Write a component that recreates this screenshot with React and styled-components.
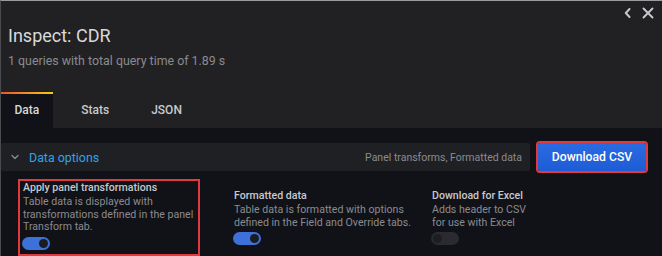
import React from "react";
import styled, { createGlobalStyle } from "styled-components";

const GlobalStyle = createGlobalStyle`
  html, body { margin: 0; padding: 0; background: #111217; overflow: hidden; }
  body { font-family: Roboto, "Liberation Sans", sans-serif; }
`;

const Frame = styled.div`
  width: 662px;
  height: 256px;
  box-sizing: border-box;
  border-top: 1px solid #9a9b9e;
  border-left: 1px solid #4a4b4f;
  background: #111217;
  overflow: hidden;
  display: flex;
  flex-direction: column;
`;

const Header = styled.header`
  background: #212124;
  display: flex;
  flex-direction: column;
`;

const TopActions = styled.div`
  height: 24px;
  display: flex;
  justify-content: flex-end;
  align-items: center;
  gap: 11px;
  padding: 0 8px 0 0;
  color: #c7c9cf;
`;

const IconButton = styled.span`
  display: inline-flex;
  align-items: center;
  justify-content: center;
  width: ${(p) => p.$w}px;
  height: 14px;
`;

const Title = styled.h1`
  margin: 0;
  padding-left: 7px;
  font-size: 18px;
  line-height: 22px;
  font-weight: 400;
  color: #d8d9da;
`;

const Subtitle = styled.div`
  margin-top: 7px;
  padding-left: 7px;
  font-size: 12.4px;
  line-height: 14px;
  color: #8a8b8f;
`;

const TabBar = styled.nav`
  margin-top: 24px;
  height: 36px;
  display: flex;
  gap: 15px;
`;

const Tab = styled.div`
  position: relative;
  height: 36px;
  padding: 0 13.5px;
  display: flex;
  align-items: center;
  font-size: 12px;
  font-weight: 500;
  color: ${(p) => (p.$active ? "#d8d9da" : "#c7c9cf")};
  background: ${(p) => (p.$active ? "#111217" : "transparent")};
  ${(p) =>
    p.$active &&
    `
    &::before {
      content: "";
      position: absolute;
      left: 0; right: 0; top: 0;
      height: 2px;
      background: linear-gradient(90deg, #f0512b 0%, #f6a623 70%, #f2cc0c 100%);
    }
  `}
`;

const Content = styled.main`
  padding: 15px 16px 0 0;
  display: flex;
  flex-direction: column;
`;

const OptionsHeaderRow = styled.div`
  display: flex;
  align-items: center;
  gap: 8px;
`;

const OptionsStrip = styled.div`
  flex: 1;
  height: 28px;
  background: #1f2024;
  border-radius: 2px;
  display: flex;
  align-items: center;
  padding: 0 8px 0 10px;
`;

const Chevron = styled.span`
  display: inline-flex;
  width: 8px;
  margin-right: 10px;
  color: #8a8b8f;
`;

const StripTitle = styled.span`
  font-size: 12.4px;
  color: #33a2e5;
  flex: 1;
`;

const StripSummary = styled.span`
  font-size: 10.5px;
  color: #8a8b8f;
`;

const PrimaryButton = styled.button`
  width: 108px;
  height: 28px;
  border: none;
  border-radius: 2px;
  background: linear-gradient(180deg, #2a6ae3 0%, #1e5cd5 100%);
  color: #ffffff;
  font-family: Roboto, "Liberation Sans", sans-serif;
  font-size: 12.2px;
  font-weight: 500;
  outline: 2px solid #e03a3e;
  outline-offset: 0;
  padding: 0;
`;

const OptionsRow = styled.div`
  margin-top: 8px;
  padding-left: 17px;
  display: flex;
  align-items: center;
`;

const Option = styled.div`
  box-sizing: border-box;
  width: ${(p) => p.$width}px;
  margin-left: ${(p) => p.$offset || 0}px;
  display: flex;
  flex-direction: column;
  ${(p) =>
    p.$highlight &&
    `
    border: 2px solid #e03a3e;
    padding: 0 3px 4px 3px;
  `}
`;

const OptionLabel = styled.div`
  font-size: 10.6px;
  line-height: 13px;
  font-weight: 500;
  color: #c7c9cf;
`;

const OptionDesc = styled.div`
  margin-top: 2px;
  font-size: 10.6px;
  line-height: 12.5px;
  color: #8a8b8f;
`;

const Toggle = styled.span`
  margin-top: 3px;
  margin-left: -1px;
  width: 28px;
  height: 13px;
  border-radius: 7px;
  background: ${(p) => (p.$on ? "#3d71d9" : "#2a2b30")};
  display: flex;
  align-items: center;
  justify-content: ${(p) => (p.$on ? "flex-end" : "flex-start")};
  padding: 0 2px;
  box-sizing: border-box;
  &::after {
    content: "";
    width: 9px;
    height: 9px;
    border-radius: 50%;
    background: ${(p) => (p.$on ? "#1b1c21" : "#1d1e23")};
  }
`;

const options = [
  {
    label: "Apply panel transformations",
    desc: "Table data is displayed with transformations defined in the panel Transform tab.",
    on: true,
    width: 182,
    highlight: true,
  },
  {
    label: "Formatted data",
    desc: "Table data is formatted with options defined in the Field and Override tabs.",
    on: true,
    width: 180,
    offset: 34,
  },
  {
    label: "Download for Excel",
    desc: "Adds header to CSV for use with Excel",
    on: false,
    width: 104,
    offset: 18,
  },
];

export default function App() {
  return (
    <>
      <GlobalStyle />
      <Frame>
        <Header>
          <TopActions>
            <IconButton $w={7}>
              <svg width="7" height="10" viewBox="0 0 7 10">
                <path d="M5.5 1 L1.8 5 L5.5 9" fill="none" stroke="currentColor" strokeWidth="1.9" strokeLinecap="round" strokeLinejoin="round" />
              </svg>
            </IconButton>
            <IconButton $w={12}>
              <svg width="12" height="12" viewBox="0 0 12 12">
                <path d="M1.5 1.5 L10.5 10.5 M10.5 1.5 L1.5 10.5" fill="none" stroke="currentColor" strokeWidth="1.9" strokeLinecap="round" />
              </svg>
            </IconButton>
          </TopActions>
          <Title>Inspect: CDR</Title>
          <Subtitle>1 queries with total query time of 1.89 s</Subtitle>
          <TabBar>
            <Tab $active>Data</Tab>
            <Tab>Stats</Tab>
            <Tab>JSON</Tab>
          </TabBar>
        </Header>
        <Content>
          <OptionsHeaderRow>
            <OptionsStrip>
              <Chevron>
                <svg width="8" height="6" viewBox="0 0 8 6">
                  <path d="M1 1.5 L4 4.5 L7 1.5" fill="none" stroke="currentColor" strokeWidth="1.3" strokeLinecap="round" strokeLinejoin="round" />
                </svg>
              </Chevron>
              <StripTitle>Data options</StripTitle>
              <StripSummary>Panel transforms, Formatted data</StripSummary>
            </OptionsStrip>
            <PrimaryButton>Download CSV</PrimaryButton>
          </OptionsHeaderRow>
          <OptionsRow>
            {options.map((o) => (
              <Option key={o.label} $width={o.width} $offset={o.offset} $highlight={o.highlight}>
                <OptionLabel>{o.label}</OptionLabel>
                <OptionDesc>{o.desc}</OptionDesc>
                <Toggle $on={o.on} />
              </Option>
            ))}
          </OptionsRow>
        </Content>
      </Frame>
    </>
  );
}
